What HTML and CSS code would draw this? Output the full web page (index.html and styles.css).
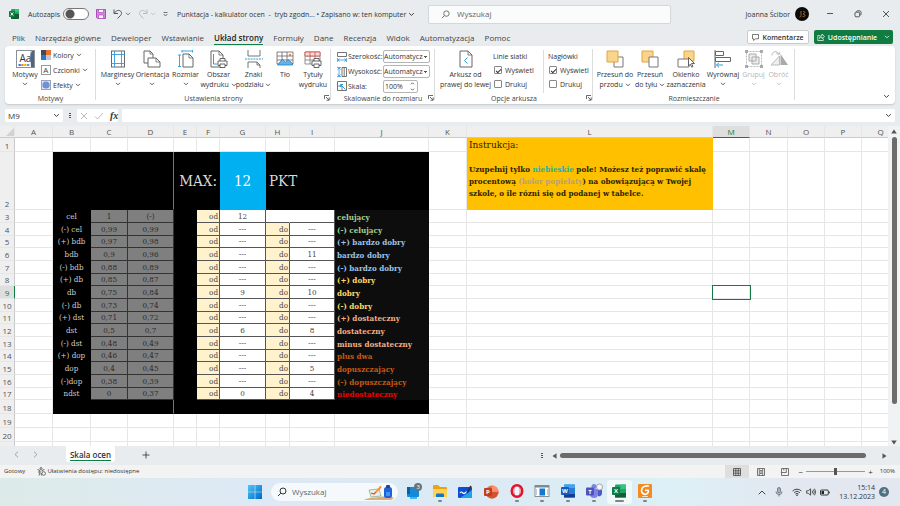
FILE: index.html
```
<!DOCTYPE html>
<html lang="pl">
<head>
    <meta charset="UTF-8">
    <meta name="viewport" content="width=device-width, initial-scale=1.0">
    <title>Punktacja - kalkulator ocen</title>
    <link rel="stylesheet" href="styles.css">
</head>
<body>
    <!-- shared glyphs -->
    <svg class="defs" width="0" height="0">
        <symbol id="caret" viewBox="0 0 6 4"><path d="M1 .8 3 2.8 5 .8" fill="none" stroke="currentColor" stroke-width=".8"/></symbol>
        <symbol id="launch" viewBox="0 0 6 6"><path d="M.5 4V.5H5M2 2l3 3M5.2 2.4v2.8H2.4" fill="none" stroke="#444" stroke-width=".8"/></symbol>
        <symbol id="lens" viewBox="0 0 10 10"><circle cx="6" cy="4" r="3" fill="none" stroke="currentColor"/><path d="M3.8 6.2 1 9" stroke="currentColor"/></symbol>
    </svg>

    <header class="titlebar">
        <div class="title-left">
            <svg class="logo" width="10" height="10" viewBox="0 0 10 10"><rect x="2" width="8" height="10" rx="1" fill="#21a366"/><path d="M6 0h3a1 1 0 0 1 1 1v2H6z" fill="#33c481"/><path d="M2 5h8v4a1 1 0 0 1-1 1H3a1 1 0 0 1-1-1z" fill="#185c37"/><rect y="2" width="6" height="6" rx=".6" fill="#107c41"/><path d="m1.7 3.5 2.6 3M4.300 3.500l-2.600 3" stroke="#fff" stroke-width=".9"/></svg>
            <label class="autosave">Autozapis <input type="checkbox" role="switch"></label>
            <button class="icon-btn" aria-label="Zapisz"><svg width="10" height="10" viewBox="0 0 10 10"><path d="M.5.5h9v9h-8l-1-1z" fill="#cf8ad8" stroke="#b146c2"/><path d="M2.500.5h5v3h-5z" fill="#fff" stroke="#b146c2" stroke-width=".7"/><path d="M2.500 9.500v-3.500h5v3.500z" fill="#fff" stroke="#b146c2" stroke-width=".7"/></svg></button>
            <button class="icon-btn undo" aria-label="Cofnij"><svg width="10" height="10" viewBox="0 0 10 10"><path d="M1 .5v4h4M1.200 4.200C3 1.500 6 .6 7.600 2.200s1 3.200-.4 4.600L4.500 9.500" fill="none" stroke="#555"/></svg><svg width="6" height="4"><use href="#caret"/></svg></button>
            <button class="icon-btn redo" aria-label="Ponów"><svg width="10" height="10" viewBox="0 0 10 10"><path d="M9 .5v4H5M8.800 4.200C7 1.500 4 .6 2.400 2.200s-1 3.200.4 4.600l2.700 2.700" fill="none" stroke="#bbb"/></svg><svg width="6" height="4"><use href="#caret"/></svg></button>
            <button class="icon-btn" aria-label="Dostosuj pasek"><svg width="5" height="5" viewBox="0 0 5 5"><path d="M.5.500h4M.7 2 2.500 4 4.300 2" fill="none" stroke="#555" stroke-width=".8"/></svg></button>
            <div class="doc-title">Punktacja - kalkulator ocen &nbsp;-&nbsp; tryb zgodn... • Zapisano w: ten komputer <svg width="7" height="5"><use href="#caret"/></svg></div>
        </div>
        <label class="search"><svg width="9" height="9"><use href="#lens"/></svg><input type="text" placeholder="Wyszukaj" aria-label="Wyszukaj"></label>
        <div class="title-right">
            <span>Joanna Ścibor</span>
            <svg width="14" height="14" viewBox="0 0 14 14"><circle cx="7" cy="7" r="7" fill="#0c0a08"/><path d="M6 4v4.500q0 1.500-1.500 1.500M8 4.500c3 0 2 2 0 2.500 3 .5 2.500 3-.5 2.500" fill="none" stroke="#a0762c" stroke-width=".9"/></svg>
            <button class="win-btn" aria-label="Minimalizuj"><svg width="8" height="8" viewBox="0 0 8 8"><path d="M1 3.500h6" stroke="#555"/></svg></button>
            <button class="win-btn" aria-label="Przywróć"><svg width="8" height="8" viewBox="0 0 8 8"><rect x="1" y="2.200" width="4.600" height="4.600" rx="1" fill="none" stroke="#444" stroke-width=".9"/><path d="M2.500 1.600Q2.700.8 3.700.8h1.800Q7 .8 7 2.300v1.900q0 .9-.7 1.200" fill="none" stroke="#444" stroke-width=".9"/></svg></button>
            <button class="win-btn" aria-label="Zamknij"><svg width="8" height="8" viewBox="0 0 8 8"><path d="m1 1 6 6M7 1 1 7" stroke="#444" stroke-width=".9"/></svg></button>
        </div>
    </header>

    <nav class="tabs">
        <a href="#">Plik</a>
        <a href="#">Narzędzia główne</a>
        <a href="#">Deweloper</a>
        <a href="#">Wstawianie</a>
        <a href="#" class="active">Układ strony</a>
        <a href="#">Formuły</a>
        <a href="#">Dane</a>
        <a href="#">Recenzja</a>
        <a href="#">Widok</a>
        <a href="#">Automatyzacja</a>
        <a href="#">Pomoc</a>
        <div class="tab-actions">
            <button class="comments"><svg width="7" height="7" viewBox="0 0 7 7"><path d="M.5.500h6v4.300H3.300L1.700 6.500V4.800H.5z" fill="none" stroke="#444" stroke-width=".7"/></svg>Komentarze</button>
            <button class="share"><svg width="8" height="8" viewBox="0 0 8 8"><path d="M2.800 2.500H.8v5h5.500V5.600M2.500 5.500C2.500 3.500 3.500 2.600 5 2.600V1l2.500 2.400L5 5.600V4.200c-1.200 0-2 .3-2.500 1.300z" fill="none" stroke="#fff" stroke-width=".7"/></svg>Udostępnianie<svg class="share-caret" width="6" height="4"><use href="#caret"/></svg></button>
        </div>
    </nav>

    <section class="ribbon">
        <div class="group themes">
            <div class="group-body">
                <button class="big"><svg width="19" height="18" viewBox="0 0 19 18"><rect x=".5" y=".5" width="18" height="17" fill="#fff" stroke="#8a9099"/><path d="M14 1h4v16h-3z" fill="#51657f"/><path d="M14 1h2l-2 4z" fill="#c9d2dd"/><text x="3.500" y="12" class="glyph-aa">Aa</text><path d="M2.500 15h2.300" stroke="#4472c4" stroke-width="2"/><path d="M5.300 15h2.300" stroke="#ed7d31" stroke-width="2"/><path d="M8.200 15h2.300" stroke="#e7b500" stroke-width="2"/><path d="M11 15h2.300" stroke="#5a9bd5" stroke-width="2"/></svg>
                    <span>Motywy</span><svg width="6" height="4"><use href="#caret"/></svg></button>
                <div class="small-list">
                    <button><svg width="10" height="10" viewBox="0 0 10 10"><rect width="5" height="5" fill="#444a55"/><rect x="5" width="5" height="5" fill="#e97132"/><rect y="5" width="5" height="5" fill="#2b78c5"/><rect x="5" y="5" width="5" height="5" fill="#bcc8da"/></svg>Kolory <svg width="6" height="4"><use href="#caret"/></svg></button>
                    <button><svg width="10" height="10" viewBox="0 0 10 10"><rect x=".5" y=".5" width="9" height="9" fill="#fff" stroke="#9a9a9a"/><text x="2.300" y="7.700" class="glyph-a">A</text></svg>Czcionki <svg width="6" height="4"><use href="#caret"/></svg></button>
                    <button><svg width="10" height="10" viewBox="0 0 10 10"><rect x=".5" y=".5" width="9" height="9" fill="#dfe5f2" stroke="#9aa3b5"/><circle cx="5" cy="5" r="3.600" fill="#6f8fd8"/></svg>Efekty <svg width="6" height="4"><use href="#caret"/></svg></button>
                </div>
            </div>
            <div class="group-name">Motywy</div>
        </div>

        <div class="group page">
            <div class="group-body">
                <button class="big"><svg width="14" height="18" viewBox="0 0 14 18"><rect x=".5" y="1" width="13" height="16" fill="#fff" stroke="#666"/><path d="M3.500 1v16M10.500 1v16M0 4.500h14M0 13.500h14" stroke="#2e9bdc" stroke-width=".9"/></svg>
                    <span>Marginesy</span><svg width="6" height="4"><use href="#caret"/></svg></button>
                <button class="big"><svg width="18" height="18" viewBox="0 0 18 18"><path d="M1 1h6l3 3v9H1z" fill="#fff" stroke="#666"/><path d="M7 1v3h3" fill="none" stroke="#666" stroke-width=".8"/><path d="M5 8h8l4 4v5H5z" fill="#fff" stroke="#666"/><path d="M13 8v4h4" fill="none" stroke="#666" stroke-width=".8"/></svg>
                    <span>Orientacja</span><svg width="6" height="4"><use href="#caret"/></svg></button>
                <button class="big"><svg width="16" height="18" viewBox="0 0 16 18"><path d="M5 4h6l4 4v9H5z" fill="#fff" stroke="#666"/><path d="M11 4v4h4" fill="none" stroke="#666" stroke-width=".8"/><path d="M4 1h11M4 0v2.500M14.500 0v2.500M1.500 5v12M0 5h3M0 16.500h3" stroke="#2e9bdc" stroke-width=".9"/></svg>
                    <span>Rozmiar</span><svg width="6" height="4"><use href="#caret"/></svg></button>
                <button class="big"><svg width="18" height="18" viewBox="0 0 18 18"><path d="M1 1h8l4 4v12H1z" fill="#fff" stroke="#666"/><path d="M9 1v4h4" fill="none" stroke="#666" stroke-width=".8"/><path d="M3.500 4v10h4" fill="none" stroke="#2e9bdc"/><path d="M10 11V8.500h5V11M10 15.500H8V11h9v4.500h-2M10 14h5v3.500h-5z" fill="#fff" stroke="#555" stroke-width=".9"/></svg>
                    <span>Obszar<br>wydruku <svg width="6" height="4"><use href="#caret"/></svg></span></button>
                <button class="big"><svg width="18" height="18" viewBox="0 0 18 18"><path d="M3 0v6h12V0M3 18v-6h9l3 3v3M12 12v3h3" fill="none" stroke="#666" stroke-width=".9"/><path d="M0 9h18" stroke="#2e9bdc" stroke-dasharray="2 .8"/></svg>
                    <span>Znaki<br>podziału <svg width="6" height="4"><use href="#caret"/></svg></span></button>
                <button class="big"><svg width="18" height="18" viewBox="0 0 18 18"><path d="M1 2h16v12H1zM1 6h16M1 10h16M6 2v12M11 2v12" fill="#fff" stroke="#666" stroke-width=".8"/><path d="m1.500 15 5-6 3 3.500 2.500-3 4.500 4V15z" fill="#63b3e8" stroke="#2680c2" stroke-width=".8"/><circle cx="14" cy="5" r="1.200" fill="#e8843a"/></svg>
                    <span>Tło</span></button>
                <button class="big"><svg width="18" height="18" viewBox="0 0 18 18"><path d="M1 2h15v12H1zM1 6h15M1 10h15M6 2v12M11 2v12" fill="#fff" stroke="#777" stroke-width=".8"/><path d="M1 2h15v4H1zM6 2v4M11 2v4" fill="#fbdcd9" stroke="#d9534f" stroke-width=".9"/><path d="M10 11V8.500h5V11M10 15.500H8V11h9v4.500h-2M10 14h5v3.500h-5z" fill="#fff" stroke="#555" stroke-width=".9"/></svg>
                    <span>Tytuły<br>wydruku</span></button>
            </div>
            <div class="group-name">Ustawienia strony</div>
            <button class="launcher" aria-label="Ustawienia strony"><svg width="6" height="6"><use href="#launch"/></svg></button>
        </div>

        <div class="group scale">
            <div class="group-body">
                <div class="field"><label for="width"><svg width="10" height="10" viewBox="0 0 10 10"><path d="M.5 4.500V.500h9v4z" fill="#fff" stroke="#666" stroke-width=".9"/><path d="M.5 6v4M9.500 6v4M1 8h8M2.500 6.500 1 8l1.500 1.500M7.500 6.500 9 8 7.500 9.500" fill="none" stroke="#2e9bdc" stroke-width=".8"/></svg>Szerokość:</label><select id="width"><option>Automatycznie</option></select></div>
                <div class="field"><label for="height"><svg width="10" height="10" viewBox="0 0 10 10"><path d="M5 .5h4.500v9H5zM7.200.5v9" fill="#fff" stroke="#666" stroke-width=".9"/><path d="M0 .5h4M0 9.500h4M2 1v8M.500 2.500 2 1l1.500 1.500M.5 7.500 2 9l1.500-1.500" fill="none" stroke="#2e9bdc" stroke-width=".8"/></svg>Wysokość:</label><select id="height"><option>Automatycznie</option></select></div>
                <div class="field"><label for="scale"><svg width="10" height="10" viewBox="0 0 10 10"><path d="M.5.500h9v9h-9z" fill="#fff" stroke="#666" stroke-width=".9"/><path d="M.5 5h4.500v4.500" fill="none" stroke="#666" stroke-width=".8"/><path d="m4 4 4.500 4.500M3.500 6V3.500H6" fill="none" stroke="#2e9bdc"/></svg>Skala:</label><div class="spin"><input id="scale" type="text" value="100%"><svg width="5" height="9" viewBox="0 0 5 9"><path d="M1 2.300 2.500.8 4 2.300M1 6.700l1.500 1.500L4 6.700" fill="none" stroke="#444" stroke-width=".8"/></svg></div></div>
            </div>
            <div class="group-name">Skalowanie do rozmiaru</div>
            <button class="launcher" aria-label="Skalowanie"><svg width="6" height="6"><use href="#launch"/></svg></button>
        </div>

        <div class="group options">
            <div class="group-body">
                <button class="big"><svg width="14" height="18" viewBox="0 0 14 18"><path d="M1 1h8l4 4v12H1z" fill="#fff" stroke="#666"/><path d="M9 1v4h4" fill="none" stroke="#666" stroke-width=".8"/><path d="m8.500 7.500-3 3 3 3" fill="none" stroke="#2e9bdc"/></svg>
                    <span>Arkusz od<br>prawej do lewej</span></button>
                <div class="checks">
                    <div>Linie siatki</div>
                    <label><input type="checkbox" checked>Wyświetl</label>
                    <label><input type="checkbox">Drukuj</label>
                </div>
                <div class="checks">
                    <div>Nagłówki</div>
                    <label><input type="checkbox" checked>Wyświetl</label>
                    <label><input type="checkbox">Drukuj</label>
                </div>
            </div>
            <div class="group-name">Opcje arkusza</div>
            <button class="launcher" aria-label="Opcje arkusza"><svg width="6" height="6"><use href="#launch"/></svg></button>
        </div>

        <div class="group arrange">
            <div class="group-body">
                <button class="big"><svg width="18" height="18" viewBox="0 0 18 18"><path d="M8 7h9v10H8z" fill="#fff" stroke="#777"/><path d="M1 1h11v11H1z" fill="#f8d58a" stroke="#e8a33d"/></svg>
                    <span>Przesuń do<br>przodu <svg width="6" height="4"><use href="#caret"/></svg></span></button>
                <button class="big"><svg width="18" height="18" viewBox="0 0 18 18"><path d="M1 1h11v11H1z" fill="#f8d58a" stroke="#e8a33d"/><path d="M8 7h9v10H8z" fill="#fff" stroke="#777"/></svg>
                    <span>Przesuń<br>do tyłu <svg width="6" height="4"><use href="#caret"/></svg></span></button>
                <button class="big"><svg width="18" height="18" viewBox="0 0 18 18"><path d="M7 1h10v10H7z" fill="#f8d58a" stroke="#e8a33d"/><path d="M1 9h11v8H1z" fill="#fff" stroke="#777"/><path d="m11.500 7.500 6 6h-3l1.500 3-1.300.7-1.400-3-1.800 1.800z" fill="#fff" stroke="#555" stroke-width=".9"/></svg>
                    <span>Okienko<br>zaznaczenia</span></button>
                <button class="big"><svg width="18" height="18" viewBox="0 0 18 18"><path d="M1 0v18" stroke="#666"/><path d="M1.500 1.500h8v4h-8zM1.500 7.500h15v4h-15z" fill="#fff" stroke="#666"/><path d="M9 15H2.500M5 12.700 2.500 15 5 17.300" fill="none" stroke="#2e9bdc"/></svg>
                    <span>Wyrównaj</span><svg width="6" height="4"><use href="#caret"/></svg></button>
                <button class="big" disabled><svg width="18" height="18" viewBox="0 0 18 18"><path d="M1.500 1.500h15v15h-15z" fill="none" stroke="#bbb" stroke-dasharray="2 1"/><path d="M4 4h7v7H4zM7 7h7v7H7z" fill="#eee" stroke="#aaa"/><path d="M0 0h3v3H0zM15 0h3v3h-3zM0 15h3v3H0zM15 15h3v3h-3z" fill="#aaa"/></svg>
                    <span>Grupuj</span><svg width="6" height="4"><use href="#caret"/></svg></button>
                <button class="big" disabled><svg width="18" height="18" viewBox="0 0 18 18"><path d="M1 15 9.500 6v9z" fill="#eee" stroke="#bbb"/><path d="M10.500 4v11H18z" fill="#aaa"/><path d="M2 5.500C2 .500 8 .500 8.500 4M6 2.800 8.700 5l1.500-3" fill="none" stroke="#bbb"/></svg>
                    <span>Obróć</span><svg width="6" height="4"><use href="#caret"/></svg></button>
            </div>
            <div class="group-name">Rozmieszczanie</div>
        </div>
        <button class="collapse" aria-label="Zwiń wstążkę"><svg width="7" height="5"><use href="#caret"/></svg></button>
    </section>

    <section class="formula-row">
        <div class="name-box"><input type="text" value="M9" aria-label="Pole nazwy"><svg width="7" height="5"><use href="#caret"/></svg></div>
        <span class="dots"></span>
        <div class="fx">
            <svg width="8" height="8" viewBox="0 0 8 8"><path d="m1 1 6 6M7 1 1 7" stroke="#bbb"/></svg>
            <svg width="10" height="8" viewBox="0 0 10 8"><path d="m1 4.500 2.500 2.500L9 1" fill="none" stroke="#bbb"/></svg>
            <i>fx</i>
        </div>
        <div class="formula"><input type="text" aria-label="Pasek formuły"><svg width="7" height="5"><use href="#caret"/></svg></div>
    </section>

    <main class="sheet">
        <div class="grid">
            <table>
                <colgroup>
                    <col class="w15"><col class="w38"><col class="w38"><col class="w37"><col class="w46"><col class="w23"><col class="w23"><col class="w46"><col class="w24"><col class="w45"><col class="w94"><col class="w38"><col class="w246"><col class="w37"><col class="w38"><col class="w37"><col class="w37"><col class="w38">
                </colgroup>
                <thead>
                    <tr><th class="corner"><svg width="8" height="8" viewBox="0 0 8 8"><path d="M8 0v8H0z" fill="#d2d2d2"/></svg></th><th>A</th><th>B</th><th>C</th><th>D</th><th>E</th><th>F</th><th>G</th><th>H</th><th>I</th><th>J</th><th>K</th><th>L</th><th class="current">M</th><th>N</th><th>O</th><th>P</th><th>Q</th></tr>
                </thead>
                <tbody>
                    <tr class="r1"><th>1</th><td></td><td></td><td></td><td></td><td></td><td></td><td></td><td></td><td></td><td></td><td></td>
                        <td rowspan="2" class="note"><h2>Instrukcja:</h2><p>Uzupełnij tylko <span class="blue">niebieskie</span> pole! Możesz też poprawić skalę procentową <span class="ash">(kolor popielaty</span>) na obowiązującą w Twojej szkole, o ile rózni się od podanej w tabelce.</p></td>
                        <td></td><td></td><td></td><td></td><td></td></tr>
                    <tr class="r2"><th>2</th><td></td><td colspan="3" class="black split"></td><td colspan="2" class="black max">MAX:</td><td class="points">12</td><td colspan="3" class="black pkt">PKT</td><td></td><td></td><td></td><td></td><td></td><td></td></tr>
                </tbody>
                <tbody class="grades">
                    <tr><th>3</th><td></td><td>cel</td><td>1</td><td>(-)</td><td></td><td>od</td><td>12</td><td class="open"></td><td></td><td class="green">celujący</td><td></td><td></td><td></td><td></td><td></td><td></td><td></td></tr>
                    <tr><th>4</th><td></td><td>(-) cel</td><td>0,99</td><td>0,99</td><td></td><td>od</td><td>---</td><td>do</td><td>---</td><td class="green">(-) celujący</td><td></td><td></td><td></td><td></td><td></td><td></td><td></td></tr>
                    <tr><th>5</th><td></td><td>(+) bdb</td><td>0,97</td><td>0,98</td><td></td><td>od</td><td>---</td><td>do</td><td>---</td><td class="sky">(+) bardzo dobry</td><td></td><td></td><td></td><td></td><td></td><td></td><td></td></tr>
                    <tr><th>6</th><td></td><td>bdb</td><td>0,9</td><td>0,96</td><td></td><td>od</td><td>---</td><td>do</td><td>11</td><td class="sky">bardzo dobry</td><td></td><td></td><td></td><td></td><td></td><td></td><td></td></tr>
                    <tr><th>7</th><td></td><td>(-) bdb</td><td>0,88</td><td>0,89</td><td></td><td>od</td><td>---</td><td>do</td><td>---</td><td class="sky">(-) bardzo dobry</td><td></td><td></td><td></td><td></td><td></td><td></td><td></td></tr>
                    <tr><th>8</th><td></td><td>(+) db</td><td>0,85</td><td>0,87</td><td></td><td>od</td><td>---</td><td>do</td><td>---</td><td class="yellow">(+) dobry</td><td></td><td></td><td></td><td></td><td></td><td></td><td></td></tr>
                    <tr><th class="current">9</th><td></td><td>db</td><td>0,75</td><td>0,84</td><td></td><td>od</td><td>9</td><td>do</td><td>10</td><td class="yellow">dobry</td><td></td><td></td><td class="selected"></td><td></td><td></td><td></td><td></td></tr>
                    <tr><th>10</th><td></td><td>(-) db</td><td>0,73</td><td>0,74</td><td></td><td>od</td><td>---</td><td>do</td><td>---</td><td class="yellow">(-) dobry</td><td></td><td></td><td></td><td></td><td></td><td></td><td></td></tr>
                    <tr><th>11</th><td></td><td>(+) dst</td><td>0,71</td><td>0,72</td><td></td><td>od</td><td>---</td><td>do</td><td>---</td><td class="peach">(+) dostateczny</td><td></td><td></td><td></td><td></td><td></td><td></td><td></td></tr>
                    <tr><th>12</th><td></td><td>dst</td><td>0,5</td><td>0,7</td><td></td><td>od</td><td>6</td><td>do</td><td>8</td><td class="peach">dostateczny</td><td></td><td></td><td></td><td></td><td></td><td></td><td></td></tr>
                    <tr><th>13</th><td></td><td>(-) dst</td><td>0,48</td><td>0,49</td><td></td><td>od</td><td>---</td><td>do</td><td>---</td><td class="peach">minus dostateczny</td><td></td><td></td><td></td><td></td><td></td><td></td><td></td></tr>
                    <tr><th>14</th><td></td><td>(+) dop</td><td>0,46</td><td>0,47</td><td></td><td>od</td><td>---</td><td>do</td><td>---</td><td class="brown">plus dwa</td><td></td><td></td><td></td><td></td><td></td><td></td><td></td></tr>
                    <tr><th>15</th><td></td><td>dop</td><td>0,4</td><td>0,45</td><td></td><td>od</td><td>---</td><td>do</td><td>5</td><td class="brown">dopuszczający</td><td></td><td></td><td></td><td></td><td></td><td></td><td></td></tr>
                    <tr><th>16</th><td></td><td>(-)dop</td><td>0,38</td><td>0,39</td><td></td><td>od</td><td>---</td><td>do</td><td>---</td><td class="brown">(-) dopuszczający</td><td></td><td></td><td></td><td></td><td></td><td></td><td></td></tr>
                    <tr><th>17</th><td></td><td>ndst</td><td>0</td><td>0,37</td><td></td><td>od</td><td>0</td><td>do</td><td>4</td><td class="red">niedostateczny</td><td></td><td></td><td></td><td></td><td></td><td></td><td></td></tr>
                </tbody>
                <tbody class="rest">
                    <tr><th>18</th><td></td><td colspan="3" class="black split"></td><td colspan="6" class="black"></td><td></td><td></td><td></td><td></td><td></td><td></td><td></td></tr>
                    <tr><th>19</th><td></td><td></td><td></td><td></td><td></td><td></td><td></td><td></td><td></td><td></td><td></td><td></td><td></td><td></td><td></td><td></td><td></td></tr>
                    <tr><th>20</th><td></td><td></td><td></td><td></td><td></td><td></td><td></td><td></td><td></td><td></td><td></td><td></td><td></td><td></td><td></td><td></td><td></td></tr>
                    <tr><th></th><td></td><td></td><td></td><td></td><td></td><td></td><td></td><td></td><td></td><td></td><td></td><td></td><td></td><td></td><td></td><td></td><td></td></tr>
                </tbody>
            </table>
        </div>
        <div class="vscroll">
            <svg width="6" height="5" viewBox="0 0 6 5"><path d="M3 .5 5.800 4.500H.2z" fill="#555"/></svg>
            <div class="vtrack"><div class="vthumb"></div></div>
            <svg width="6" height="5" viewBox="0 0 6 5"><path d="M3 4.500 5.800.5H.2z" fill="#555"/></svg>
        </div>
    </main>

    <footer class="sheet-tabs">
        <button class="nav-btn" aria-label="Poprzedni"><svg width="5" height="7" viewBox="0 0 5 7"><path d="M4 .700 1 3.500l3 2.800" fill="none" stroke="#999" stroke-width=".9"/></svg></button>
        <button class="nav-btn" aria-label="Następny"><svg width="5" height="7" viewBox="0 0 5 7"><path d="m1 .7 3 2.800-3 2.800" fill="none" stroke="#999" stroke-width=".9"/></svg></button>
        <button class="sheet-tab"><span>Skala ocen</span></button>
        <button class="add" aria-label="Nowy arkusz"><svg width="8" height="8" viewBox="0 0 8 8"><path d="M4 .5v7M.5 4h7" stroke="#444" stroke-width=".9"/></svg></button>
        <div class="hscroll">
            <span class="dots"></span>
            <svg width="5" height="6" viewBox="0 0 5 6"><path d="M.5 3 4.500.2v5.600z" fill="#555"/></svg>
            <div class="htrack"><div class="hthumb"></div></div>
            <svg width="5" height="6" viewBox="0 0 5 6"><path d="M4.500 3 .5.200v5.600z" fill="#555"/></svg>
        </div>
    </footer>

    <footer class="status">
        <span>Gotowy</span>
        <svg class="access" width="9" height="9" viewBox="0 0 9 9"><circle cx="4" cy="1.500" r="1" fill="none" stroke="#444" stroke-width=".8"/><path d="M.5 2.500 3 3.500v2L2 8.500M7.500 2.500 5 3.500v1M4 6l.5 2.500M1 5h2" fill="none" stroke="#444" stroke-width=".8"/><circle cx="6.700" cy="6.500" r="1.800" fill="none" stroke="#444" stroke-width=".7"/></svg>
        <span>Ułatwienia dostępu: niedostępne</span>
        <div class="views">
            <button class="on" aria-label="Normalny"><svg width="8" height="8" viewBox="0 0 8 8"><path d="M.5.500h7v7h-7zM.5 2.800h7M.5 5.200h7M2.800.5v7M5.200.5v7" fill="none" stroke="#444" stroke-width=".8"/></svg></button>
            <button aria-label="Układ strony"><svg width="8" height="8" viewBox="0 0 8 8"><path d="M.5.500h7v7h-7zM2.300 1v6.500M5.700 1v6.500M3 2.500h2M3 4h2M3 5.500h2" fill="none" stroke="#555" stroke-width=".8"/></svg></button>
            <button aria-label="Podgląd podziału"><svg width="8" height="8" viewBox="0 0 8 8"><path d="M.5.500h7v7h-7zM.5 4.500h4.800V.500M2.800.500v2" fill="none" stroke="#555" stroke-width=".8"/></svg></button>
        </div>
        <div class="zoom">
            <span>−</span><input type="range" min="0" max="100" value="50" aria-label="Powiększenie"><span>+</span>
        </div>
        <span class="percent">100%</span>
    </footer>

    <footer class="taskbar">
        <div class="dock">
            <button class="start" aria-label="Start"><svg width="14" height="14" viewBox="0 0 14 14"><defs><linearGradient id="win" x2="1" y2="1"><stop stop-color="#4cc8f5"/><stop offset="1" stop-color="#0068c9"/></linearGradient></defs><path d="M0 0h6.700v6.700H0zM7.300 0H14v6.700H7.300zM0 7.300h6.700V14H0zM7.300 7.300H14V14H7.300z" fill="url(#win)"/></svg></button>
            <label class="task-search"><svg width="10" height="10"><use href="#lens"/></svg><input type="text" placeholder="Wyszukaj" aria-label="Wyszukaj w systemie">
                <svg width="31" height="16" viewBox="0 0 31 16"><path d="M0 16c5-3 10-2 15-3s12-1 15 1l-3 2z" fill="#dcae78"/><path d="m5 6 10-1 2 7-10 1z" fill="#e7f0e4" stroke="#8fae92" stroke-width=".8"/><path d="m7 9 3 1 7-7" fill="none" stroke="#e5484d" stroke-width="1.300"/><path d="m12 8 5-6" stroke="#f0a030" stroke-width="1.500"/><rect x="20" y="3" width="8" height="11" rx="2.500" fill="#1d62d6"/><rect x="22" y="1" width="4" height="3" rx="1" fill="#2b3f87"/><path d="M22 8h4v4h-4z" fill="#3f95f2"/></svg></label>
            <div class="apps">
                <button aria-label="Widżety"><svg width="18" height="18" viewBox="0 0 18 18"><rect x="2" y="4" width="12" height="10" rx="1" fill="#1389d8"/><rect x="2" y="4" width="3" height="7" fill="#0a5ea8"/><path d="M5 14h7v2H5z" fill="#48b5ec"/><circle cx="13" cy="4" r="4" fill="#64737c"/><text x="11.500" y="6.300" class="badge-text">3</text></svg></button>
                <button class="run" aria-label="Eksplorator"><svg width="16" height="16" viewBox="0 0 16 16"><path d="M1 3q0-1 1-1h4l2 2h6q1 0 1 1v8q0 1-1 1H2q-1 0-1-1z" fill="#e8a317"/><path d="M1 6h14v7q0 1-1 1H2q-1 0-1-1z" fill="#ffd256"/><path d="M4 14v-2.500q0-1 1-1h6q1 0 1 1V14z" fill="#1476c6"/></svg></button>
                <button aria-label="Whiteboard"><svg width="16" height="16" viewBox="0 0 16 16"><rect x="1" y="3" width="14" height="11" rx="1" fill="#0b4fd8"/><path d="M3 14 15 6v7q0 1-1 1z" fill="#1ca2ef"/><path d="M3 9c2-3 3 2 5 0s2-1 3-1" fill="none" stroke="#fff" stroke-width="1.200"/><path d="M10 9 14 2" stroke="#333" stroke-width="1.600"/></svg></button>
                <button aria-label="PowerPoint"><svg width="16" height="16" viewBox="0 0 16 16"><circle cx="9" cy="8" r="6.500" fill="#ed6c47"/><path d="M9 1.500A6.500 6.500 0 0 1 15.500 8H9z" fill="#ff8f6b"/><path d="M2.500 8h13a6.500 6.500 0 0 1-13 0z" fill="#d35230"/><rect x="1" y="4" width="8" height="8" rx="1" fill="#c43e1c"/><text x="3" y="10.200" class="app-letter">P</text></svg></button>
                <button class="run" aria-label="Opera"><svg width="16" height="16" viewBox="0 0 16 16"><ellipse cx="8" cy="8" rx="5.300" ry="5.800" fill="#fff" stroke="#e8112d" stroke-width="2.400"/><ellipse cx="8" cy="8" rx="3.200" ry="4.800" fill="#eef5fa" stroke="#b80f22" stroke-width=".6"/></svg></button>
                <button class="run" aria-label="Okno"><svg width="16" height="16" viewBox="0 0 16 16"><rect x="1" y="2.500" width="14" height="11" fill="#fff" stroke="#8a8f94"/><path d="M1 2.500h14v2H1z" fill="#7f8890"/><rect x="5.500" y="5.500" width="5.500" height="7" fill="#1279cf"/><path d="M2.500 6v6M13.500 6v6" stroke="#c5c9cc"/></svg></button>
                <button class="run" aria-label="Word"><svg width="16" height="16" viewBox="0 0 16 16"><rect x="4" y="1.500" width="11" height="13" rx="1" fill="#2b7cd3"/><path d="M4 1.500h11v3.500H4z" fill="#41a5ee"/><path d="M4 11h11v3.500H4z" fill="#103f91"/><rect x="1" y="4" width="8" height="8" rx="1" fill="#185abd"/><text x="2" y="10.200" class="app-letter">W</text></svg></button>
                <button class="run" aria-label="Teams"><svg width="18" height="16" viewBox="0 0 18 16"><circle cx="9" cy="3.500" r="2.500" fill="#7b83eb"/><path d="M5 6h8v5a4 4 0 0 1-8 0z" fill="#7b83eb"/><path d="M13 7h4v4a3 3 0 0 1-4 2z" fill="#5059c9"/><rect x="1" y="4.500" width="8" height="8" rx="1" fill="#4b53bc"/><text x="3.200" y="10.800" class="app-letter">T</text><circle cx="14.500" cy="4" r="3" fill="#f5f7f8" stroke="#8f9498" stroke-width=".8"/></svg></button>
                <button class="run focus" aria-label="Excel"><svg width="16" height="16" viewBox="0 0 16 16"><rect x="4" y="1.500" width="11" height="13" rx="1" fill="#21a366"/><path d="M9.500 1.500H15V6H9.500z" fill="#33c481"/><path d="M4 10h11v4.500H4z" fill="#185c37"/><rect x="1" y="4" width="8" height="8" rx="1" fill="#107c41"/><text x="3" y="10.200" class="app-letter">X</text></svg></button>
                <button class="run" aria-label="Foxit"><svg width="16" height="16" viewBox="0 0 16 16"><rect x="1" y="1" width="14" height="14" rx="1" fill="#f58a1f"/><path d="M12 3C7 2.500 4.500 4.500 4.500 7.500S7.500 12 9.500 11s2-3 1.500-3.700H8" fill="none" stroke="#fff" stroke-width="1.600"/><path d="M5 13.500h6" stroke="#ffe0bd"/></svg></button>
            </div>
        </div>
        <div class="tray">
            <svg width="8" height="5" viewBox="0 0 8 5"><path d="m.7 4.300 3.300-3.300 3.300 3.300" fill="none" stroke="#333" stroke-width=".9"/></svg>
            <svg width="8" height="10" viewBox="0 0 8 10"><rect x="2.500" y=".5" width="3" height="5.500" rx="1.500" fill="#a7b2bc" stroke="#55606a" stroke-width=".7"/><path d="M1 4.500a3 3 0 0 0 6 0M4 7.500v2" fill="none" stroke="#55606a" stroke-width=".8"/></svg>
            <div class="net">
                <svg width="10" height="8" viewBox="0 0 10 8"><path d="M.6 3a6.200 6.200 0 0 1 8.800 0M2.100 4.600a4.100 4.100 0 0 1 5.800 0M3.500 6.100a2.100 2.100 0 0 1 3 0" fill="none" stroke="#333" stroke-width=".9"/><circle cx="5" cy="7.200" r=".8" fill="#333"/></svg>
                <svg width="10" height="8" viewBox="0 0 10 8"><path d="M.6 2.800h1.600L4.500.800v6.400L2.200 5.200H.6zM6 2.500q1.200 1.500 0 3M7.300 1.500q2 2.500 0 5M8.500.7q2.500 3.300 0 6.600" fill="none" stroke="#333" stroke-width=".8"/></svg>
                <svg width="10" height="7" viewBox="0 0 10 7"><rect x=".5" y="1" width="7.800" height="5" rx="1" fill="none" stroke="#222" stroke-width=".9"/><path d="M1.500 2h2.500v3H1.500zM9 2.700h.8v1.600H9z" fill="#222"/></svg>
            </div>
            <div class="clock">15:14<br>13.12.2023</div>
            <span class="count">4</span>
        </div>
    </footer>
</body>
</html>
```
FILE: styles.css
```
* {
    box-sizing: border-box;
}
body {
    margin: 0;
    height: 100vh;
    display: flex;
    flex-direction: column;
    overflow: hidden;
    background-color: #e8ecef;
    color: #333;
    font-family: "Open Sans", "Noto Sans", sans-serif;
    font-size: 7px;
    line-height: 9px;
}
button, input, select {
    font: inherit;
    color: inherit;
    border: 0;
    padding: 0;
    margin: 0;
    background: none;
    min-width: 0;
}
svg {
    flex: none;
}
.defs {
    position: absolute;
}

/* title bar */
.titlebar {
    display: flex;
    align-items: center;
    height: 28px;
    flex: none;
}
.title-left {
    display: flex;
    align-items: center;
    gap: 7px;
    width: 428px;
    padding-left: 9px;
    white-space: nowrap;
}
.logo {
    margin-right: 2px;
}
.autosave {
    display: flex;
    align-items: center;
    gap: 3px;
}
.autosave input {
    appearance: none;
    width: 26px;
    height: 12px;
    border: 1px solid #777;
    border-radius: 6px;
    background: #fff radial-gradient(circle at 6px 5px, #555 4px, transparent 5px);
}
.icon-btn {
    display: flex;
    align-items: center;
    gap: 2px;
    color: #555;
}
.redo {
    color: #bbb;
}
.doc-title {
    margin-left: 2px;
}
.search {
    display: flex;
    align-items: center;
    gap: 7px;
    flex: 1;
    height: 19px;
    padding: 0 12px;
    border: 1px solid #d4d8da;
    border-radius: 2px;
    background-color: #fafbfb;
    color: #666;
    font-size: 8px;
}
.search input, .task-search input {
    flex: 1;
    height: 14px;
    line-height: 14px;
}
::placeholder {
    color: #666;
    opacity: 1;
    line-height: 14px;
}
.title-right {
    display: flex;
    align-items: center;
    justify-content: flex-end;
    width: 229px;
    padding-right: 4px;
}
.title-right svg {
    display: block;
}
.title-right > svg {
    margin: 0 7px 0 5px;
}
.win-btn {
    display: grid;
    place-items: center;
    width: 28px;
    height: 20px;
}
.win-btn:last-child {
    width: 20px;
    margin-left: 4px;
}

/* tab strip */
.tabs {
    display: flex;
    align-items: center;
    gap: 10px;
    height: 18px;
    flex: none;
    padding: 0 7px 0 12px;
    font-size: 8px;
    white-space: nowrap;
}
.tabs a {
    height: 16px;
    line-height: 17px;
    color: #444;
    text-decoration: none;
}
.tabs .active {
    font-weight: 600;
    color: #222;
    border-bottom: 1px solid #107c41;
}
.tab-actions {
    display: flex;
    flex: none;
    gap: 5px;
    margin-left: auto;
    font-size: 7px;
    font-weight: 600;
}
.tab-actions button {
    display: flex;
    align-items: center;
    justify-content: center;
    gap: 3px;
    height: 14px;
    border-radius: 2px;
}
.comments {
    width: 62px;
    border: 1px solid #c8cccf;
    background-color: #fff;
}
.share {
    width: 79px;
    background-color: #107c41;
    color: #fff;
}
.share-caret {
    margin-left: 4px;
}

/* ribbon */
.ribbon {
    display: flex;
    flex: none;
    height: 58px;
    margin: 0 5px;
    border-radius: 4px;
    background-color: #fff;
    box-shadow: 0 1px 2px #c3c8cb;
    white-space: nowrap;
}
.group {
    position: relative;
    display: flex;
    flex-direction: column;
    padding: 4px 4px 0;
    background: linear-gradient(#dcdcdc, #dcdcdc) right 3px / 1px 51px no-repeat;
}
.group-body {
    display: flex;
    height: 43px;
}
.group-name {
    text-align: center;
    line-height: 11px;
    color: #444;
}
.launcher {
    position: absolute;
    right: 1px;
    bottom: 2px;
    line-height: 6px;
}
.big {
    display: flex;
    flex-direction: column;
    align-items: center;
    flex: none;
    line-height: 10px;
}
.big > span {
    margin-top: 2px;
}
.big > svg:last-child {
    margin-top: 2px;
}
.big:disabled {
    color: #b5b5b5;
}
.themes {
    width: 91px;
}
.themes .big {
    width: 32px;
}
.small-list {
    display: flex;
    flex-direction: column;
    gap: 5px;
}
.small-list button {
    display: flex;
    align-items: center;
    gap: 2px;
    height: 10px;
}
.page {
    width: 235px;
}
.page .group-body {
    display: grid;
    grid-template-columns: 35px 35px 31px 35px 35px 28px 28px;
    justify-items: center;
}
.scale {
    width: 104px;
}
.scale .group-body, .checks {
    display: flex;
    flex-direction: column;
}
.scale .group-body {
    padding-left: 2px;
    gap: 1px;
}
.field {
    display: flex;
    align-items: center;
    height: 14px;
}
.field label {
    display: flex;
    align-items: center;
    gap: 1px;
    width: 46px;
    flex: none;
}
.field select, .spin {
    width: 47px;
    height: 13px;
    padding-left: 1px;
    border: 1px solid #b5b5b5;
    border-radius: 2px;
    background-color: #fff;
}
.field select {
    appearance: none;
    padding-right: 6px;
    padding-left: 0;
    background-image: linear-gradient(45deg, transparent 50%, #555 50%), linear-gradient(-45deg, transparent 50%, #555 50%);
    background-position: right 3px top 5px, right 1px top 5px;
    background-size: 2px 2px;
    background-repeat: no-repeat;
}
.spin {
    display: flex;
    align-items: center;
    width: 35px;
    padding-right: 2px;
}
.spin input {
    width: 25px;
}
.options {
    width: 158px;
}
.options .big {
    width: 53px;
}
.checks {
    flex: none;
    gap: 4px;
    width: 51px;
    padding-top: 2px;
    padding-left: 1px;
}
.checks + .checks {
    padding-left: 4px;
    width: 46px;
    border-left: 1px solid #dcdcdc;
}
.checks label {
    display: flex;
    align-items: center;
    gap: 3px;
    height: 10px;
    padding-left: 1px;
}
.checks input {
    appearance: none;
    display: grid;
    flex: none;
    place-items: center;
    width: 8px;
    height: 8px;
    border: 1px solid #888;
    border-radius: 1px;
}
.checks input:checked::before {
    content: "";
    width: 4px;
    height: 2px;
    border: solid #333;
    border-width: 0 0 1px 1px;
    transform: rotate(-45deg);
}
.arrange {
    width: 202px;
}
.arrange .group-body {
    display: grid;
    grid-template-columns: 36px 34px 38px 36px 25px 25px;
    justify-items: center;
}
.collapse {
    align-self: flex-end;
    margin: 0 5px 3px auto;
}
.glyph-aa {
    font-size: 10px;
    fill: #333;
}
.glyph-a {
    font-size: 8px;
    fill: #444;
}

/* formula bar */
.formula-row {
    display: flex;
    align-items: center;
    flex: none;
    height: 22px;
    padding: 1px 5px 0;
    font-size: 8px;
}
.name-box, .fx, .formula {
    display: flex;
    align-items: center;
    height: 13px;
    padding: 0 3px;
    border-radius: 2px;
    background-color: #fff;
}
.name-box {
    width: 58px;
}
.name-box input, .formula input {
    flex: 1;
}
.dots {
    width: 2px;
    height: 6px;
    margin: 0 6px;
    background: repeating-linear-gradient(#555 0 1px, transparent 1px 2px);
}
.fx {
    gap: 6px;
    width: 41px;
    margin-right: 4px;
}
.fx i {
    font: italic bold 10px/10px "Liberation Serif", serif;
}
.formula {
    flex: 1;
}

/* worksheet */
.sheet {
    display: flex;
    flex: 1;
    min-height: 0;
}
.grid {
    flex: 1;
    overflow: hidden;
    background-color: #fff;
}
table {
    table-layout: fixed;
    width: 100%;
    border-spacing: 0;
    font-family: "DejaVu Serif Condensed", "DejaVu Serif", serif;
    font-size: 8px;
    line-height: 10px;
}
.w15 { width: 15px; }
.w23 { width: 23px; }
.w24 { width: 24px; }
.w37 { width: 37px; }
.w38 { width: 38px; }
.w45 { width: 45px; }
.w46 { width: 46px; }
.w94 { width: 94px; }
.w246 { width: 246px; }
th, td {
    padding: 0;
    border: solid #e6e6e6;
    border-width: 0 1px 1px 0;
    white-space: nowrap;
}
th {
    background-color: #efefef;
    color: #555;
    font: 8px/10px "Open Sans", sans-serif;
    vertical-align: bottom;
}
thead th {
    height: 12px;
    border-bottom-color: #c9c9c9;
}
tbody th {
    border-right-color: #c9c9c9;
}
.corner {
    text-align: right;
    line-height: 8px;
}
th.current {
    background-color: #dedede;
    color: #107c41;
    border-bottom-color: #107c41;
}
tbody th.current {
    border-bottom-color: #e6e6e6;
    border-right-color: #107c41;
}
.r1 {
    height: 14px;
}
.r2 {
    height: 58px;
}
.note {
    padding: 1px 2px;
    border: 0;
    background-color: #ffc000;
    color: #2a1f00;
    vertical-align: top;
    white-space: normal;
}
.note h2 {
    margin: 0 0 12px;
    font-size: 10px;
    line-height: 12px;
    font-weight: normal;
}
.note p {
    margin: 0;
    font-weight: bold;
    line-height: 12px;
}
.note .blue {
    color: #22b0a8;
}
.note .ash {
    color: #b5a27a;
}
.black {
    background-color: #000;
    border-color: #000;
    color: #d9d9d9;
}
.split {
    border-right-color: #777;
}
.max, .pkt, .points {
    font-size: 15px;
}
.max {
    padding-right: 2px;
    text-align: right;
}
.points {
    background-color: #00b0f0;
    border-color: #00b0f0;
    color: #fff;
    text-align: center;
}
.pkt {
    padding-left: 3px;
}
.grades tr {
    height: 13px;
}
.grades tr:nth-child(3n) {
    height: 12px;
}
.grades td {
    padding-top: 1px;
    text-align: center;
    color: #444;
}
/* label */
.grades td:nth-child(3), .grades td:nth-child(6) {
    background-color: #000;
    border-color: #000;
    color: #d0d0d0;
}
/* percent thresholds */
.grades td:nth-child(4), .grades td:nth-child(5) {
    background-color: #7f7f7f;
    border-color: #333;
    color: #2c2c2c;
}
.grades td:nth-child(7), .grades td:nth-child(9) {
    background-color: #fff2cc;
    border-color: #555;
    padding-right: 1px;
    text-align: right;
}
.grades td:nth-child(8), .grades td:nth-child(10) {
    border-color: #555;
}
.grades td.open {
    background-color: #fff;
    border-right-color: #fff;
}
.grades td:nth-child(11) {
    padding-left: 2px;
    background-color: #0d0d0d;
    border-color: #0d0d0d;
    font-weight: bold;
    text-align: left;
}
.grades .green { color: #a9d08e; }
.grades .sky { color: #9bc2e6; }
.grades .yellow { color: #ffd966; }
.grades .peach { color: #f4b084; }
.grades .brown { color: #c65911; }
.grades .red { color: #f00000; }
.selected {
    outline: 1px solid #107c41;
}
.rest tr {
    height: 14px;
}
.vscroll {
    display: flex;
    flex-direction: column;
    align-items: center;
    gap: 3px;
    width: 12px;
    padding: 3px 0 1px;
    background-color: #f1f2f3;
}
.vtrack {
    flex: 1;
}
.vthumb {
    width: 5px;
    height: 89%;
    border-radius: 3px;
    background-color: #6b6b6b;
}

/* sheet tabs */
.sheet-tabs {
    display: flex;
    align-items: center;
    flex: none;
    height: 19px;
    padding: 0 13px 0 7px;
}
.nav-btn {
    width: 19px;
}
.sheet-tab {
    align-self: flex-start;
    width: 49px;
    height: 16px;
    margin-left: 21px;
    border-radius: 0 0 3px 3px;
    background-color: #fff;
    font-size: 8px;
    font-weight: 600;
    color: #333;
    white-space: nowrap;
}
.sheet-tab span {
    border-bottom: 1px solid #107c41;
}
.add {
    margin-left: 27px;
    line-height: 8px;
}
.hscroll {
    display: flex;
    align-items: center;
    gap: 3px;
    width: 352px;
    margin-left: auto;
}
.htrack {
    flex: 1;
}
.hthumb {
    width: 96%;
    height: 5px;
    border-radius: 3px;
    background-color: #6b6b6b;
}

/* status bar */
.status {
    display: flex;
    align-items: center;
    flex: none;
    height: 13px;
    padding: 0 5px 0 4px;
    background-color: #f3f3f3;
    font-size: 6px;
    white-space: nowrap;
}
.access {
    margin: 0 1px 0 12px;
}
.views {
    display: flex;
    margin-left: auto;
}
.views button {
    display: grid;
    place-items: center;
    width: 24px;
    height: 13px;
}
.views .on {
    background-color: #dedede;
}
.zoom {
    display: flex;
    align-items: center;
    gap: 3px;
    margin-left: 2px;
    font-size: 8px;
}
.zoom input {
    appearance: none;
    width: 59px;
    height: 1px;
    background-color: #999;
}
.zoom input::-webkit-slider-thumb {
    appearance: none;
    width: 3px;
    height: 7px;
    background-color: #555;
}
.percent {
    margin-left: 7px;
}

/* taskbar */
.taskbar {
    display: grid;
    grid-template-columns: 1fr auto 1fr;
    align-items: center;
    flex: none;
    height: 28px;
    padding-left: 4px;
    background: linear-gradient(90deg, #dcebe9, #dde9f4 25%, #dbeaf4 55%, #ddf0f6 75%, #e3e7f0 88%);
}
.dock {
    display: flex;
    align-items: center;
    grid-column: 2;
}
.start {
    width: 18px;
    height: 14px;
}
.task-search {
    display: flex;
    align-items: center;
    gap: 5px;
    width: 127px;
    height: 18px;
    margin: 0 3px 0 7px;
    padding: 0 3px 0 6px;
    border-radius: 9px;
    background-color: #f5f9fb;
    font-size: 8px;
}
.apps {
    display: grid;
    grid-template-columns: repeat(10, 1fr);
    width: 257px;
}
.apps button {
    display: flex;
    flex-direction: column;
    align-items: center;
    justify-content: center;
    height: 24px;
    border-radius: 3px;
}
.run::after {
    content: "";
    width: 4px;
    height: 2px;
    margin-top: 1px;
    border-radius: 1px;
    background-color: #7b858c;
}
.run.focus {
    background-color: #f1f8fa;
}
.run.focus::after {
    width: 9px;
}
.badge-text {
    font-size: 6px;
    fill: #fff;
}
.app-letter {
    font-size: 6px;
    font-weight: bold;
    fill: #fff;
}
.tray {
    display: flex;
    align-items: center;
    justify-content: flex-end;
    gap: 9px;
    padding-right: 11px;
    white-space: nowrap;
}
.net {
    display: flex;
    align-items: center;
    gap: 4px;
}
.clock {
    text-align: right;
}
.count {
    width: 10px;
    height: 10px;
    margin-left: -5px;
    border-radius: 50%;
    background-color: #52707f;
    color: #fff;
    text-align: center;
    line-height: 10px;
}
```
